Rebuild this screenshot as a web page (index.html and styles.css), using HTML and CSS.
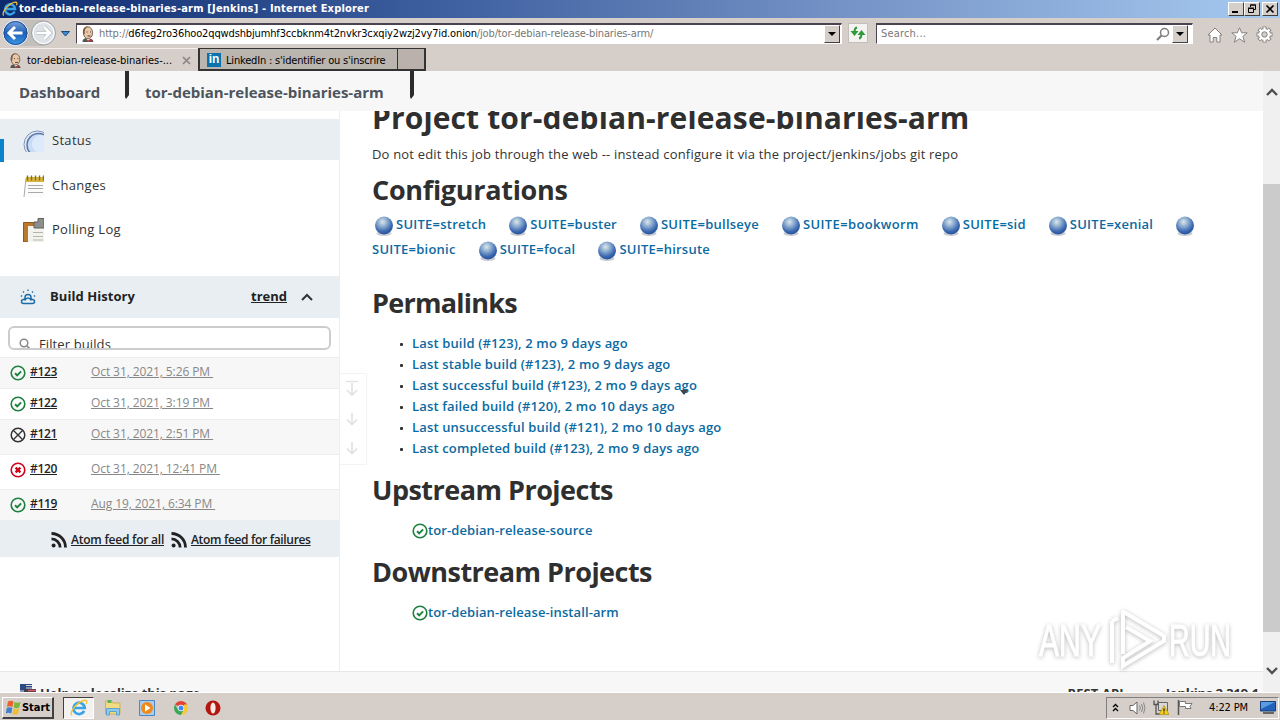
FILE: index.html
```
<!DOCTYPE html>
<html lang="en">
<head>
    <meta charset="UTF-8">
    <meta name="viewport" content="width=device-width, initial-scale=1.0">
    <title>tor-debian-release-binaries-arm [Jenkins]</title>
    <link rel="stylesheet" href="styles.css">
</head>
<body>
    <!-- shared icons -->
    <svg width="0" height="0" class="defs">
        <defs>
            <radialGradient id="ballFill" cx="0.42" cy="0.3" r="0.72">
                <stop offset="0" stop-color="#dce8ea"/>
                <stop offset="0.35" stop-color="#8faed0"/>
                <stop offset="0.75" stop-color="#3a67b0"/>
                <stop offset="1" stop-color="#27509a"/>
            </radialGradient>
            <linearGradient id="navBlue" x1="0" y1="0" x2="0" y2="1">
                <stop offset="0" stop-color="#7fa8dc"/>
                <stop offset="0.5" stop-color="#1e5fb8"/>
                <stop offset="1" stop-color="#3f9be8"/>
            </linearGradient>
            <symbol id="ball" viewBox="0 0 24 24">
                <ellipse cx="12" cy="19.5" rx="7.5" ry="2.5" fill="#c9ccd2"/>
                <circle cx="12" cy="11.500" r="9" fill="url(#ballFill)"/>
            </symbol>
            <symbol id="ok" viewBox="0 0 16 16">
                <circle cx="8" cy="8" r="6.8" fill="none" stroke="#1d8040" stroke-width="1.6"/>
                <path d="M5 8.2l2.2 2.1 3.9-4" fill="none" stroke="#1d8040" stroke-width="1.9"/>
            </symbol>
            <symbol id="aborted" viewBox="0 0 16 16">
                <circle cx="8" cy="8" r="6.8" fill="none" stroke="#333" stroke-width="1.5"/>
                <path d="M3.5 3.5l9 9M12.5 3.5l-9 9" stroke="#333" stroke-width="1.4"/>
            </symbol>
            <symbol id="failed" viewBox="0 0 16 16">
                <circle cx="8" cy="8" r="6.8" fill="none" stroke="#d0021b" stroke-width="1.6"/>
                <path d="M5.6 5.6l4.8 4.8M10.4 5.6l-4.8 4.8" stroke="#d0021b" stroke-width="2.3"/>
            </symbol>
            <symbol id="rss" viewBox="0 0 16 16">
                <circle cx="2.6" cy="13.4" r="2" fill="#222"/>
                <path d="M0.5 6.9a8.6 8.6 0 0 1 8.6 8.6M0.5 1.5a14 14 0 0 1 14 14" fill="none" stroke="#222" stroke-width="2.8"/>
            </symbol>
            <symbol id="ie" viewBox="0 0 20 20">
                <path d="M15.8 13.2a6.3 6.3 0 1 1 .6-3.2H5.5" fill="none" stroke="#38a3e6" stroke-width="3"/>
                <path d="M2 18.2C-1 14 9 2.500 16.500 1.400c2.500-.2 2.600 1.800 1.500 4" fill="none" stroke="#f2c335" stroke-width="1.5"/>
            </symbol>
            <symbol id="butler" viewBox="0 0 16 16">
                <path d="M2.500 16c0-3 2-4 5-4s5.500 1 6 4z" fill="#555"/>
                <path d="M6 12l2.500 3.500L11 12z" fill="#fff"/>
                <path d="M7 14.500l4-1.500v2.500z" fill="#c33"/>
                <ellipse cx="8" cy="6.800" rx="4.600" ry="6" fill="#e8c8a8" stroke="#5a4534" stroke-width="0.8"/>
                <path d="M3.200 8C2 2.500 5 .3 8 .3c-3 1.700-3.300 3.700-3.300 7.700z" fill="#7b5a40"/>
                <path d="M6.500 6h1M10 6h1M7.500 10h3" stroke="#4a3528" stroke-width="1"/>
            </symbol>
            <symbol id="down" viewBox="0 0 16 16">
                <path d="M8 2v11M3 8.500l5 5 5-5" fill="none" stroke="#e2e2e2" stroke-width="1.7"/>
            </symbol>
        </defs>
    </svg>

    <div class="titlebar">
        <svg class="title-icon"><use href="#ie"/></svg>
        <span class="title-text">tor-debian-release-binaries-arm [Jenkins] - Internet Explorer</span>
        <div class="win-buttons">
            <button><svg width="12" height="10"><path d="M2 8h6" stroke="#000" stroke-width="2"/></svg></button>
            <button><svg width="12" height="10"><path d="M4.500 3V1h5v4.500H8M2.500 4.500h5v4h-5zM2 4h6M4 1h6" fill="none" stroke="#000"/></svg></button>
            <button class="close"><svg width="12" height="10"><path d="M2.500 1.500l7 7M9.500 1.500l-7 7" stroke="#000" stroke-width="1.600"/></svg></button>
        </div>
    </div>

    <div class="navbar">
        <svg class="nav-arrows" width="76" height="30" viewBox="0 0 76 30">
            <path d="M15 2h29v26H15z" fill="#c3bfba"/>
            <circle cx="15.500" cy="15" r="12.500" fill="url(#navBlue)" stroke="#f0f4fa" stroke-width="1"/>
            <circle cx="15.500" cy="15" r="11.500" fill="none" stroke="#1c4c94" stroke-width="1"/>
            <path d="M22.500 15H9.500M15 9l-6 6 6 6" fill="none" stroke="#fff" stroke-width="3"/>
            <circle cx="43.500" cy="15" r="12" fill="#dfe2e6" stroke="#9da2a8" stroke-width="1"/>
            <circle cx="43.500" cy="15" r="10.500" fill="none" stroke="#fff" stroke-width="1"/>
            <path d="M36.500 15h13M44 9l6 6-6 6" fill="none" stroke="#b5bac1" stroke-width="4"/>
            <path d="M36.500 15h13M44 9l6 6-6 6" fill="none" stroke="#fff" stroke-width="2.600"/>
            <path d="M61.500 13.500h8l-4 4.500z" fill="#3b8ad8" stroke="#1c4c80" stroke-width="1"/>
        </svg>
        <div class="address">
            <svg width="16" height="16"><use href="#butler"/></svg>
            <span class="url">http://<b>d6feg2ro36hoo2qqwdshbjumhf3ccbknm4t2nvkr3cxqiy2wzj2vy7id.onion</b>/job/tor-debian-release-binaries-arm/</span>
            <button class="drop"></button>
        </div>
        <button class="refresh">
            <svg width="18" height="18" viewBox="0 0 18 18"><path d="M8 3.500Q5.500 4 5.500 8M10 14.500q2.500-.5 2.500-4.500" fill="none" stroke="#2f9a3c" stroke-width="2"/><path d="M1.500 7h8l-4 5zM8.500 11h8l-4-5z" fill="#2f9a3c"/></svg>
        </button>
        <div class="search">
            <span>Search...</span>
            <svg width="14" height="14"><circle cx="8.500" cy="5.500" r="4" fill="none" stroke="#7d7d7d" stroke-width="1.500"/><path d="M5.500 8.500L1 13" stroke="#7d7d7d" stroke-width="2.200"/></svg>
            <button class="drop"></button>
        </div>
        <div class="tools">
            <svg width="16" height="16" viewBox="0 0 16 16"><path d="M1 8l7-7 7 7h-2v7H9.800v-4.500H6.200V15H3V8z" fill="#fff" stroke="#85827e"/></svg>
            <svg width="17" height="16" viewBox="0 0 17 16"><path d="M8.500.8l2.200 5h5.500l-4.300 3.600 1.700 5.800-5.100-3.500-5.100 3.500 1.700-5.800L.8 5.800h5.500z" fill="#fff" stroke="#85827e"/></svg>
            <svg width="17" height="17" viewBox="0 0 17 17">
                <path d="M8.500.5v16M.5 8.500h16M2.800 2.800l11.400 11.400M14.200 2.800L2.800 14.200" stroke="#85827e" stroke-width="4"/>
                <circle cx="8.500" cy="8.500" r="6" fill="#fff" stroke="#85827e" stroke-width="1"/>
                <path d="M8.500 1.300v14.400M1.300 8.500h14.400M3.400 3.400l10.200 10.200M13.600 3.400L3.400 13.600" stroke="#fff" stroke-width="2.200"/>
                <circle cx="8.500" cy="8.500" r="2.700" fill="#d6cec8" stroke="#85827e"/>
            </svg>
        </div>
    </div>

    <div class="tabs">
        <div class="tab active">
            <svg width="15" height="15"><use href="#butler"/></svg>
            <span>tor-debian-release-binaries-...</span>
            <svg class="tab-close" width="9" height="9"><path d="M1 1l7 7M8 1L1 8" stroke="#8a8682" stroke-width="1.700"/></svg>
        </div>
        <div class="tab linkedin">
            <i>in</i>
            <span>LinkedIn : s'identifier ou s'inscrire</span>
        </div>
        <div class="tab new-tab"></div>
    </div>

    <div class="viewport">
        <div class="page">
            <div class="breadcrumbs">
                <a class="crumb-home">Dashboard</a>
                <svg width="5" height="28"><path d="M1 0h4v24l-3 4-1-2z" fill="#2b2b2b"/></svg>
                <a class="crumb-job">tor-debian-release-binaries-arm</a>
                <svg width="5" height="28"><path d="M1 0h4v24l-3 4-1-2z" fill="#2b2b2b"/></svg>
            </div>

            <div class="content">
                <aside class="side-panel">
                    <a class="task selected">
                        <svg width="21" height="22" viewBox="0 0 21 22">
                            <circle cx="14.500" cy="14.500" r="13.500" fill="#e4ebf4" stroke="#8093b8"/>
                            <circle cx="15.500" cy="15" r="11.500" fill="#c9dcf5" stroke="#5a76a8" stroke-width="1.500"/>
                            <circle cx="18" cy="14" r="9" fill="#dceafb"/>
                        </svg>
                        Status
                    </a>
                    <a class="task">
                        <svg width="21" height="22" viewBox="0 0 21 22">
                            <path d="M3 3h18v19H1z" fill="#fbfbf9"/>
                            <path d="M3 3L1 22" stroke="#aaa"/>
                            <path d="M3 2h18v5H2.500z" fill="#d8b63c"/>
                            <path d="M4.500 0.500v5M8.500 0.500v5M12.500 0.500v5M16.500 0.500v5M20.500 0.500v5" stroke="#84701a" stroke-width="1.400"/>
                            <path d="M5 10.500h15M5 13.500h15M5 17.500h15" stroke="#aaa"/>
                        </svg>
                        Changes
                    </a>
                    <a class="task polling">
                        <svg width="21" height="24" viewBox="0 0 21 24">
                            <path d="M.5 4.500H21V24H.5z" fill="#b9782b" stroke="#8c5a1c"/>
                            <path d="M5 8h16v16H5z" fill="#f3f3ee"/>
                            <path d="M11 4h4V.5h6V10H11z" fill="#8c8f8c" stroke="#5e615e"/>
                            <path d="M10 14.500h10M10 18.500h10M10 22h10" stroke="#b5b5b0"/>
                        </svg>
                        Polling Log
                    </a>

                    <div class="history-header">
                        <svg width="16" height="16" viewBox="0 0 16 16">
                            <path d="M3.500 14.500a2 2 0 0 1 0-4q1.500 0 1.500-2a3 3 0 0 1 6 0q0 2 1.500 2a2 2 0 0 1 0 4zM4.500 11.500Q8 6.500 11.500 11.500" fill="none" stroke="#1d6da8" stroke-width="1.500"/>
                            <path d="M8 .5V2M3 2.500l1 1M13 2.500l-1 1M.8 7h1.400M13.800 7h1.400" stroke="#1d6da8" stroke-width="1.400"/>
                        </svg>
                        <b class="history-title">Build History</b>
                        <a class="trend">trend</a>
                        <svg class="chevron" width="12" height="8"><path d="M1 7l5-5 5 5" fill="none" stroke="#333" stroke-width="2"/></svg>
                    </div>

                    <div class="filter">
                        <svg width="13" height="13"><circle cx="5" cy="5" r="3.800" fill="none" stroke="#888" stroke-width="1.500"/><path d="M8 8l4.500 4.500" stroke="#888" stroke-width="1.700"/></svg>
                        <span>Filter builds</span>
                    </div>

                    <div class="builds">
                        <div class="build odd">
                            <svg width="16" height="16"><use href="#ok"/></svg>
                            <a class="num">#123</a><a class="date">Oct 31, 2021, 5:26 PM&nbsp;</a>
                        </div>
                        <div class="build">
                            <svg width="16" height="16"><use href="#ok"/></svg>
                            <a class="num">#122</a><a class="date">Oct 31, 2021, 3:19 PM&nbsp;</a>
                        </div>
                        <div class="build odd tall">
                            <svg width="16" height="16"><use href="#aborted"/></svg>
                            <a class="num">#121</a><a class="date">Oct 31, 2021, 2:51 PM&nbsp;</a>
                        </div>
                        <div class="build tall">
                            <svg width="16" height="16"><use href="#failed"/></svg>
                            <a class="num">#120</a><a class="date">Oct 31, 2021, 12:41 PM&nbsp;</a>
                        </div>
                        <div class="build odd">
                            <svg width="16" height="16"><use href="#ok"/></svg>
                            <a class="num">#119</a><a class="date">Aug 19, 2021, 6:34 PM&nbsp;</a>
                        </div>
                    </div>

                    <div class="feeds">
                        <svg width="16" height="16"><use href="#rss"/></svg>
                        <a class="feed-all">Atom feed for all</a>
                        <svg width="16" height="16"><use href="#rss"/></svg>
                        <a class="feed-failures">Atom feed for failures</a>
                    </div>

                    <div class="pager">
                        <svg width="16" height="17" viewBox="0 0 16 17"><path d="M2 1.500h12M8 3v12M3 10l5 5 5-5" fill="none" stroke="#e2e2e2" stroke-width="1.700"/></svg>
                        <svg width="16" height="16"><use href="#down"/></svg>
                        <svg width="16" height="16"><use href="#down"/></svg>
                    </div>
                </aside>

                <main class="main-panel">
                    <h1>Project tor-debian-release-binaries-arm</h1>
                    <p class="description">Do not edit this job through the web -- instead configure it via the project/jenkins/jobs git repo</p>

                    <h2>Configurations</h2>
                    <div class="suites">
                        <a><svg><use href="#ball"/></svg>SUITE=stretch</a>
                        <a><svg><use href="#ball"/></svg>SUITE=buster</a>
                        <a><svg><use href="#ball"/></svg>SUITE=bullseye</a>
                        <a class="wide"><svg><use href="#ball"/></svg>SUITE=bookworm</a>
                        <a><svg><use href="#ball"/></svg>SUITE=sid</a>
                        <a><svg><use href="#ball"/></svg>SUITE=xenial</a>
                        <a><svg><use href="#ball"/></svg></a>
                    </div>
                    <div class="suites">
                        <a>SUITE=bionic</a>
                        <a><svg><use href="#ball"/></svg>SUITE=focal</a>
                        <a><svg><use href="#ball"/></svg>SUITE=hirsute</a>
                    </div>

                    <h2 class="permalinks-title">Permalinks</h2>
                    <ul class="permalinks">
                        <li><a>Last build (#123), 2 mo 9 days ago</a></li>
                        <li><a>Last stable build (#123), 2 mo 9 days ago</a></li>
                        <li class="has-menu"><a>Last successful build (#123), 2 mo 9 days ago</a><svg width="8" height="5"><path d="M0 0h8L4 5z" fill="#444"/></svg></li>
                        <li><a>Last failed build (#120), 2 mo 10 days ago</a></li>
                        <li><a>Last unsuccessful build (#121), 2 mo 10 days ago</a></li>
                        <li><a>Last completed build (#123), 2 mo 9 days ago</a></li>
                    </ul>

                    <h2 class="related-title">Upstream Projects</h2>
                    <div class="related"><svg width="16" height="16"><use href="#ok"/></svg><a>tor-debian-release-source</a></div>
                    <h2 class="related-title downstream">Downstream Projects</h2>
                    <div class="related"><svg width="16" height="16"><use href="#ok"/></svg><a>tor-debian-release-install-arm</a></div>
                </main>
            </div>

            <footer>
                <svg width="16" height="16" viewBox="0 0 16 16">
                    <path d="M0 0h12v9H0z" fill="#2b4a86"/>
                    <path d="M6 1.500h6M6 4h6M0 7h12" stroke="#e4dada" stroke-width="1.200"/>
                    <path d="M4 5h12v9H4z" fill="#3a3f55"/>
                    <path d="M8 6.500h8" stroke="#d55" stroke-width="1.500"/>
                </svg>
                <b class="localize">Help us localize this page</b>
                <b class="rest">REST API</b>
                <b class="version">Jenkins 2.319.1</b>
            </footer>
        </div>

        <div class="scrollbar">
            <svg width="12" height="8"><path d="M1 7l5-5 5 5" fill="none" stroke="#505050" stroke-width="2.400"/></svg>
            <div class="thumb"></div>
            <svg width="12" height="8"><path d="M1 1l5 5 5-5" fill="none" stroke="#505050" stroke-width="2.400"/></svg>
        </div>

        <svg class="watermark" width="210" height="74" viewBox="0 0 210 74">
            <g fill="#fff">
                <text x="8" y="52" textLength="62" lengthAdjust="spacingAndGlyphs">ANY</text>
                <text x="138" y="52" textLength="62" lengthAdjust="spacingAndGlyphs">RUN</text>
            </g>
            <path d="M81 17v42M81 17l6-3M92 7v43M91 7l42 25v5L92 62V54l27-17-24-14" fill="none" stroke="#fff" stroke-width="4"/>
        </svg>
    </div>

    <div class="taskbar">
        <button class="start">
            <svg width="17" height="17" viewBox="0 0 17 17">
                <path d="M3 2.500q3-1.500 5.500 0L7.500 8q-3-1.500-5.500 0z" fill="#e8622c"/>
                <path d="M9.500 3q3 1.300 6 0l-1.300 5.500q-3 1.300-5.500 0z" fill="#7ab83c"/>
                <path d="M1.800 9q3-1.500 5.500 0l-1 5.500q-3-1.500-5.500 0z" fill="#3f80cf"/>
                <path d="M8.500 9.500q3 1.300 5.500 0L13 15q-3 1.300-5.500 0z" fill="#f3bb2e"/>
            </svg>
            Start
        </button>
        <div class="quick">
            <div class="running"><svg width="18" height="18" viewBox="0 0 20 20"><use href="#ie" width="20" height="20"/></svg></div>
            <svg width="18" height="17" viewBox="0 0 18 17">
                <path d="M1.500 2h6l1.500 2h7v11h-14.500z" fill="#f2dc83" stroke="#cdb25a"/>
                <path d="M3.500 1h4v3h-4z" fill="#5ab65a"/>
                <path d="M2.500 16V9.500h13V16h-3v-3.500h-7V16z" fill="#8cc9ec" stroke="#5fa3cc"/>
            </svg>
            <svg width="16" height="16" viewBox="0 0 16 16">
                <path d="M.5.5h15v15H.5z" fill="#a9cdf0" stroke="#4a86c6"/>
                <circle cx="8" cy="8" r="6" fill="#ee8a1c"/>
                <path d="M6 4.500l5.500 3.500L6 11.500z" fill="#fff"/>
            </svg>
            <svg width="14" height="14" viewBox="0 0 14 14">
                <path d="M7 7L.94 3.500A7 7 0 0 1 13.060 3.500z" fill="#e04434"/>
                <path d="M.94 3.500A7 7 0 0 0 7 14L10 8.500H4z" fill="#3aa757"/>
                <path d="M13.060 3.500A7 7 0 0 1 7 14l3-5.500V3.500z" fill="#f8c934"/>
                <circle cx="7" cy="7" r="3.200" fill="#fff"/>
                <circle cx="7" cy="7" r="2.500" fill="#4285f4"/>
            </svg>
            <svg width="16" height="16" viewBox="0 0 16 16">
                <circle cx="8" cy="8" r="7.500" fill="#b3160f"/>
                <ellipse cx="8" cy="8" rx="2.600" ry="5.600" fill="#f6e9e6"/>
            </svg>
        </div>
        <div class="tray">
            <svg class="more" width="7" height="9"><path d="M1 4l2.500-2.500L6 4M1 8l2.500-2.500L6 8" fill="none" stroke="#000" stroke-width="1.300"/></svg>
            <svg class="sound" width="17" height="14" viewBox="0 0 17 14"><path d="M1 4.500h3L8 1v12L4 9.500H1z" fill="#fff" stroke="#666"/><path d="M10.500 4.500q1.700 2.500 0 5M12.500 3q2.500 4 0 8M14.500 1.500q3 5.500 0 11" fill="none" stroke="#888"/></svg>
            <svg class="network" width="16" height="15" viewBox="0 0 16 15"><path d="M5.500 2.500h9v8h-9z" fill="#d8d8d8" stroke="#666"/><path d="M1 .5v4h4v-4M3 4.500V14h5" fill="none" stroke="#555" stroke-width="1.300"/><path d="M11 5.500l5 9H6z" fill="#f7cf1d" stroke="#b08d10" stroke-width=".7"/><path d="M11 8.500v3M11 12.500v1" stroke="#222" stroke-width="1.300"/></svg>
            <svg class="flag" width="17" height="15" viewBox="0 0 17 15"><path d="M1.500 0v15" stroke="#555" stroke-width="1.500"/><path d="M2.500 1.500h6v2h6.500l-2 3 1 2H8.500v-2h-6z" fill="#fff" stroke="#777"/></svg>
            <span class="clock">4:22 PM</span>
            <svg width="16" height="13" viewBox="0 0 16 13"><path d="M.5.5h15v9.500H.5z" fill="#2262b8" stroke="#173f7a"/><path d="M1 1h14L1 8z" fill="#5b9be0"/><path d="M3 12h11" stroke="#444" stroke-width="1.500"/></svg>
        </div>
    </div>
</body>
</html>
```
FILE: styles.css
```
* {
    box-sizing: border-box;
}

body {
    margin: 0;
    width: 1280px;
    height: 720px;
    overflow: hidden;
    display: flex;
    flex-direction: column;
    background: #d6cec8;
    font-family: "Open Sans", "Noto Sans", sans-serif;
    font-size: 13px;
    color: #333;
}

svg {
    display: block;
    flex: none;
}

.defs {
    position: absolute;
}

button {
    padding: 0;
    background: #d6cec8;
    border: 1px solid;
    border-color: #fff #404040 #404040 #fff;
    display: flex;
    align-items: center;
    justify-content: center;
    flex: none;
}

.titlebar,
.navbar,
.tabs,
.taskbar {
    font-family: "DejaVu Sans Condensed", "DejaVu Sans", sans-serif;
    font-size: 11px;
    color: #000;
    flex: none;
    display: flex;
}

/* window chrome */
.titlebar {
    height: 18px;
    background: linear-gradient(to right, #0d2a6e, #3d5e9f 34%, #7593c6 66%, #a6caf0);
    align-items: center;
    padding: 0 2px;
}

.title-icon {
    width: 16px;
    height: 16px;
}

.title-text {
    margin-left: 1px;
    color: #fff;
    font-weight: bold;
    letter-spacing: 0.19px;
    line-height: 16px;
    white-space: nowrap;
}

.win-buttons {
    display: flex;
    margin-left: auto;
}

.win-buttons button {
    width: 16px;
    height: 14px;
}

.win-buttons .close {
    margin-left: 2px;
}

.navbar {
    height: 30px;
    align-items: center;
}

.address,
.search {
    height: 21px;
    background: #fff;
    border: 1px solid;
    border-color: #4a4450 #fff #fff #4a4450;
    border-top-width: 2px;
    display: flex;
    align-items: center;
}

.address {
    width: 766px;
    padding: 0 1px 0 3px;
}

.url {
    margin-left: 3px;
    color: #777;
    letter-spacing: -0.14px;
    white-space: nowrap;
}

.url b {
    color: #000;
    font-weight: normal;
}

.drop {
    width: 16px;
    height: 18px;
    margin-left: auto;
}

.drop::after {
    content: "";
    border: 4px solid transparent;
    border-top-color: #000;
    border-bottom: 0;
}

.refresh {
    width: 20px;
    height: 20px;
    margin: 0 8px 0 6px;
    background: #f4f3f1;
    border-color: #c4bfba;
}

.search {
    width: 317px;
    padding: 0 4px 0 4px;
    color: #777;
}

.search span {
    letter-spacing: 0.18px;
}

.search svg {
    margin-left: auto;
}

.search .drop {
    margin-left: 2px;
}

.tools {
    display: flex;
    align-items: center;
    gap: 8px;
    margin: 3px 0 0 14px;
}

.tabs {
    height: 23px;
}

.tab {
    height: 23px;
    display: flex;
    align-items: center;
    white-space: nowrap;
}

.tab.active {
    width: 198px;
    padding-left: 8px;
    border-top: 1px solid #f2efec;
}

.tab.active span {
    margin-left: 4px;
    letter-spacing: -0.04px;
}

.tab-close {
    margin-left: 10px;
}

.linkedin {
    width: 200px;
    padding-left: 7px;
    background: #bab5ae;
    border: solid #333;
    border-width: 1px 1px 2px 2px;
}

.linkedin i {
    width: 14px;
    height: 14px;
    margin-top: 2px;
    background: #0a72ac;
    color: #fff;
    font: bold 12px/13px "Liberation Sans", sans-serif;
    text-align: center;
}

.linkedin span {
    margin: 2px 0 0 5px;
    letter-spacing: -0.18px;
}

.new-tab {
    width: 28px;
    background: #bab0ac;
    border: solid #333;
    border-width: 1px 2px 2px 0;
}

/* browser page area */
.viewport {
    height: 621px;
    display: flex;
    position: relative;
    background: #fff;
}

.page {
    width: 1263px;
    display: flex;
    flex-direction: column;
    overflow: hidden;
}

.breadcrumbs {
    height: 40px;
    flex: none;
    background: #f7f7f7;
    display: flex;
    padding-left: 19px;
    font-size: 15px;
    font-weight: bold;
    line-height: 42px;
    color: #4d545d;
}

.crumb-home {
    width: 105px;
    letter-spacing: -0.05px;
}

.crumb-job {
    width: 264px;
    margin-left: 16px;
    letter-spacing: -0.01px;
}

.content {
    height: 560px;
    flex: none;
    display: flex;
}

.side-panel {
    width: 340px;
    border-right: 1px solid #eee;
    padding-top: 8px;
    position: relative;
}

.task {
    display: flex;
    align-items: center;
    height: 41px;
    margin-bottom: 4px;
    padding-left: 23px;
    gap: 8px;
    letter-spacing: 0.3px;
}

.task svg {
    margin-top: 2px;
}

.task.polling {
    margin: -1px 0 0;
}

.task.selected {
    background: #e9eef2;
    position: relative;
}

.task.selected::before {
    content: "";
    position: absolute;
    left: 0;
    top: 20px;
    width: 4px;
    height: 23px;
    background: #0b83cb;
}

.history-header {
    height: 42px;
    margin-top: 27px;
    padding: 0 26px 0 20px;
    background: #e9eef2;
    display: flex;
    align-items: center;
    color: #222;
}

.polling + .history-header {
    margin-top: 27px;
}

.history-title {
    margin: -2px 0 0 14px;
    letter-spacing: 0.06px;
}

.trend {
    margin: -2px 0 0 auto;
    font-weight: bold;
    text-decoration: underline;
}

.chevron {
    margin-left: 14px;
}

.filter {
    width: 323px;
    height: 24px;
    margin: 8px 0 7px 8px;
    border: 2px solid #ccc;
    border-radius: 6px;
    display: flex;
    padding: 10px 0 0 9px;
    overflow: hidden;
}

.filter span {
    margin: -3px 0 0 7px;
    line-height: 18px;
    letter-spacing: 0.11px;
}

.build {
    height: 31px;
    padding: 0 0 0 10px;
    border-top: 1px solid #eee;
    display: flex;
    align-items: flex-start;
    font-size: 12px;
    line-height: 27px;
}

.build.odd {
    background: #f7f7f7;
}

.build svg {
    margin-top: 7px;
}

.build.tall {
    height: 35px;
}

.num {
    width: 57px;
    margin-left: 4px;
    font-weight: 600;
    color: #222;
    letter-spacing: -0.33px;
    text-decoration: underline;
}

.date {
    margin-left: 4px;
    color: #888;
    letter-spacing: -0.09px;
    text-decoration: underline;
}

.feeds {
    height: 37px;
    background: #e9eef2;
    display: flex;
    align-items: center;
    padding: 2px 0 0 51px;
    font-size: 12px;
    font-weight: 600;
    color: #222;
}

.feeds a {
    text-decoration: underline;
    margin-left: 4px;
    white-space: nowrap;
}

.feed-all {
    width: 97px;
    margin-right: 3px;
    letter-spacing: -0.23px;
}

.feed-failures {
    letter-spacing: -0.33px;
}

/* build history pager, sticks out over the main panel */
.pager {
    position: absolute;
    left: 340px;
    top: 262px;
    width: 27px;
    height: 92px;
    border: 1px solid #f3f3f3;
    border-left: 0;
    background: #fff;
    display: flex;
    flex-direction: column;
    align-items: center;
    justify-content: space-between;
    padding: 6px 3px 8px 0;
}

.main-panel {
    flex: 1;
    padding-left: 32px;
    overflow: hidden;
}

h1,
h2 {
    margin: 0;
    font-weight: bold;
    line-height: 36px;
    color: #2f2f2f;
}

h1 {
    font-size: 30px;
    letter-spacing: 0.13px;
    margin-top: -11px;
}

h2 {
    font-size: 27px;
    letter-spacing: -0.3px;
}

.description {
    margin: 8px 0;
    line-height: 20px;
    letter-spacing: 0.18px;
}

.main-panel a {
    color: #0b6aa2;
    font-weight: 600;
    letter-spacing: 0.15px;
    white-space: nowrap;
}

.suites {
    display: flex;
    gap: 20px;
    height: 25px;
}

.suites:nth-of-type(1) {
    margin-top: 4px;
}

.main-panel .suites a {
    display: flex;
    line-height: 25px;
    letter-spacing: 0.24px;
}

.main-panel .suites .wide {
    letter-spacing: 0.36px;
}

.suites svg {
    width: 24px;
    height: 24px;
    margin-top: 2px;
}

.permalinks-title {
    margin-top: 23px;
    letter-spacing: -0.74px;
}

.permalinks {
    margin: 12px 0 0;
    padding-left: 40px;
    line-height: 21px;
    list-style: none;
}

.permalinks li {
    display: flex;
    align-items: center;
}

.permalinks li::before {
    content: "";
    width: 3px;
    height: 3px;
    margin: 1px 9px 0 -12px;
    border-radius: 1px;
    background: #333;
}

.has-menu {
    position: relative;
}

.has-menu svg {
    position: absolute;
    left: 268px;
    top: 15px;
}

.related-title {
    margin-top: 13px;
    letter-spacing: -0.52px;
}

.downstream {
    margin-top: 14px;
}

.related {
    height: 20px;
    margin: 12px 0 0 40px;
    display: flex;
    line-height: 20px;
}

.main-panel .related a {
    letter-spacing: 0.1px;
}

.related svg {
    margin-top: 3px;
}

footer {
    height: 60px;
    flex: none;
    background: #f7f7f7;
    border-top: 1px solid #e8e8e8;
    display: flex;
    align-items: flex-start;
    padding: 12px 4px 0 20px;
    line-height: 18px;
    white-space: nowrap;
}

.localize {
    margin-left: 4px;
    letter-spacing: -0.1px;
}

.rest {
    margin-left: auto;
    font-size: 13px;
    letter-spacing: 0.1px;
}

.version {
    margin-left: 42px;
    letter-spacing: -0.15px;
}

.scrollbar {
    width: 17px;
    background: #f0f0f0;
    display: flex;
    flex-direction: column;
    align-items: center;
    padding: 17px 0 17px;
}

.thumb {
    width: 17px;
    height: 448px;
    margin: 88px 0 auto;
    background: #cbcbcb;
}

.watermark {
    position: absolute;
    left: 1031px;
    top: 533px;
    filter: drop-shadow(0 1px 2px rgba(0, 0, 0, 0.28));
}

.watermark text {
    font: 44px "Liberation Sans", sans-serif;
    stroke: #fff;
    stroke-width: 1px;
}

/* taskbar */
.taskbar {
    height: 28px;
    border-top: 1px solid #fff;
    align-items: center;
    padding: 2px 1px 0 2px;
}

.start {
    width: 52px;
    height: 22px;
    border-width: 1px 2px 2px 1px;
    font: bold 11px "DejaVu Sans Condensed", "DejaVu Sans", sans-serif;
    letter-spacing: 0;
}

.quick {
    display: flex;
    align-items: center;
    gap: 17px;
    margin-left: 9px;
}

.running {
    width: 31px;
    height: 22px;
    margin-right: -7px;
    background: #f4f2f0;
    border: 1px solid;
    border-color: #404040 #fff #fff #404040;
    display: flex;
    align-items: center;
    justify-content: center;
}

.quick svg:nth-of-type(3) {
    margin-left: 2px;
}

.tray {
    width: 173px;
    height: 22px;
    margin-left: auto;
    padding-left: 5px;
    border: 1px solid;
    border-color: #808080 #fff #fff #808080;
    display: flex;
    align-items: center;
}

.sound {
    margin-left: 10px;
}

.network {
    margin-left: 7px;
}

.flag {
    margin-left: 8px;
}

.clock {
    margin: 0 12px 0 15px;
    letter-spacing: -0.12px;
    white-space: nowrap;
}
```
